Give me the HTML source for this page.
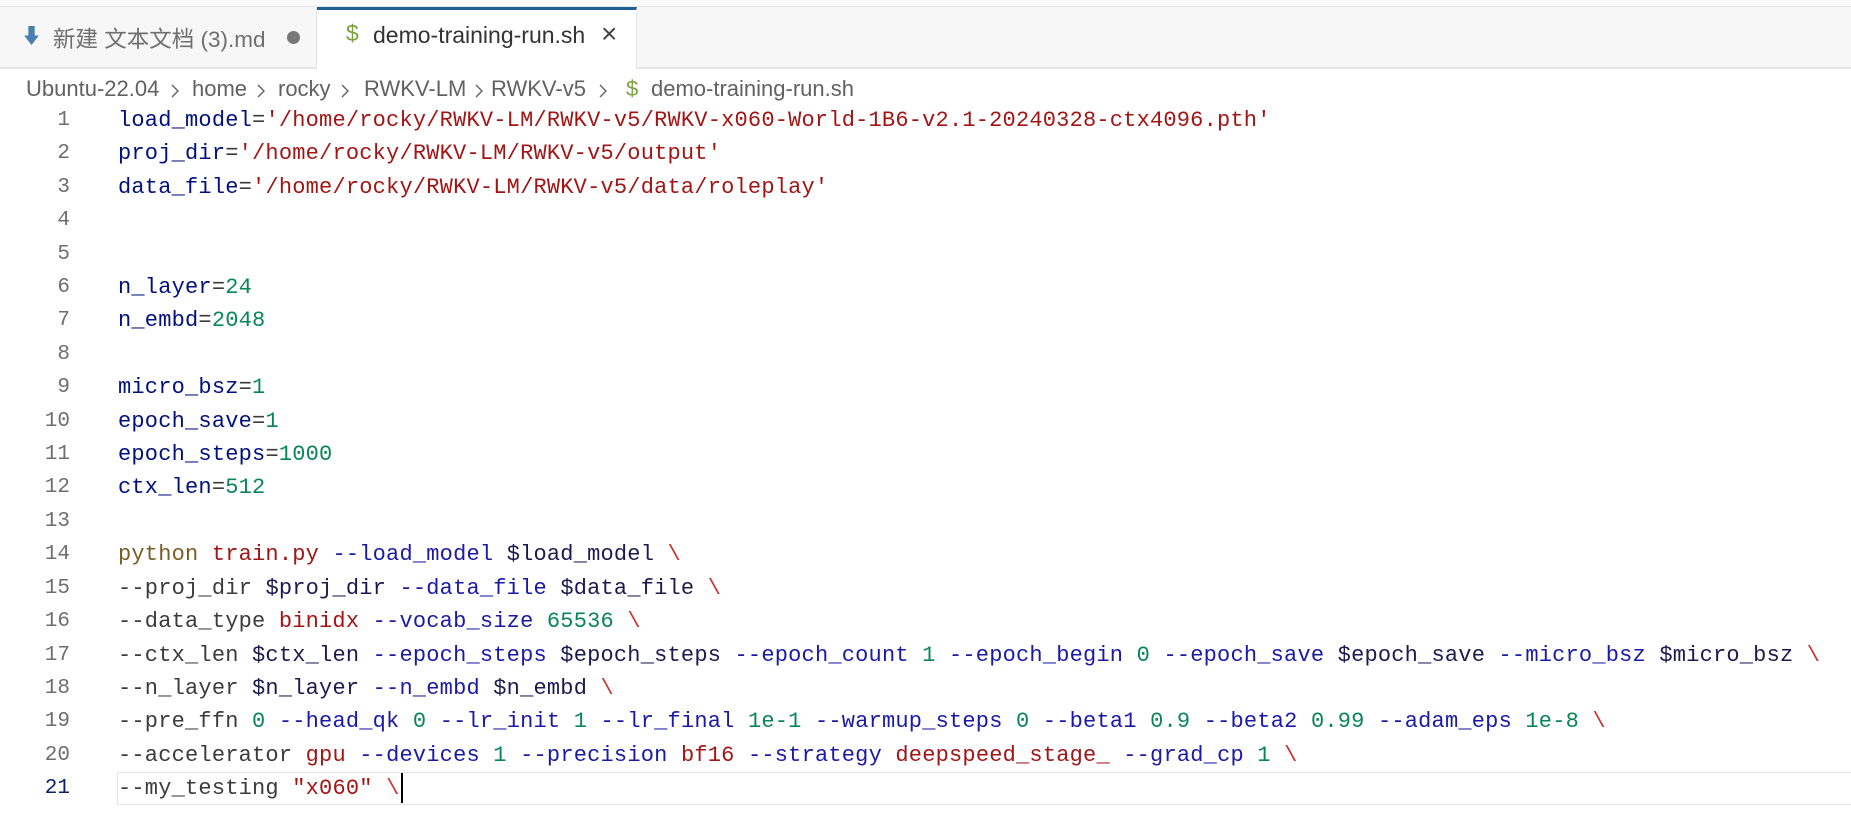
<!DOCTYPE html>
<html><head><meta charset="utf-8"><style>
body{margin:0;width:1851px;height:818px;background:#fff;overflow:hidden;position:relative;font-family:"Liberation Sans","Noto Sans CJK SC",sans-serif}
.top{position:absolute;left:0;top:0;width:1851px;height:6px;background:#fbfbfb;border-bottom:1px solid #e8e8e8}
.bar{position:absolute;left:0;top:7px;width:1851px;height:60px;background:#f7f7f7;border-bottom:2px solid #e5e5e5}
.tab1{position:absolute;left:0;top:7px;width:316px;height:60px;border-right:1px solid #e5e5e5;color:#6f6f6f;font-size:22.5px}
.tab2{position:absolute;left:317px;top:7px;width:320px;height:62px;background:#fff;border-top:3px solid #1f5f94;box-sizing:border-box;border-right:1px solid #e5e5e5;color:#333;font-size:23px}
.cb{position:absolute;top:76px;font-size:22px;color:#616161;white-space:pre}
.ch{position:absolute;top:83px}
.ln{position:absolute;left:0;width:70px;text-align:right;font-family:"Liberation Mono",monospace;font-size:21px;color:#6e6e6e;line-height:33.4px}
.code{position:absolute;left:118px;font-family:"Liberation Mono",monospace;font-size:22px;letter-spacing:0.2px;color:#3b3b3b;line-height:33.4px;white-space:pre}
.s{color:#a31515}.n{color:#098658}.v{color:#001080}.o{color:#1a1aa6}.d{color:#1b1b50}.f{color:#795e26}.b{color:#cd3131}
</style></head><body>
<div class="top"></div><div class="bar"></div>
<div class="tab1"><svg style="position:absolute;left:24px;top:19px" width="15" height="19" viewBox="0 0 14 18"><path d="M4 0h6v9h4l-7 9-7-9h4z" fill="#4a7fb0"/></svg><span style="position:absolute;left:53px;top:15px">新建 文本文档 (3).md</span><span style="position:absolute;left:287px;top:24px;width:13px;height:13px;border-radius:50%;background:#777"></span></div>
<div class="tab2"><span style="position:absolute;left:29px;top:10px;color:#7ba23f;font-size:23px">$</span><span style="position:absolute;left:56px;top:12px">demo-training-run.sh</span><span style="position:absolute;left:284px;top:8px;font-size:28px;color:#444">×</span></div>
<span class="cb" style="left:26px">Ubuntu-22.04</span>
<svg class="ch" style="left:170px" width="10" height="16" viewBox="0 0 10 16"><path d="M2 2l6 6-6 6" stroke="#616161" stroke-width="1.4" fill="none"/></svg>
<span class="cb" style="left:192px">home</span>
<svg class="ch" style="left:256px" width="10" height="16" viewBox="0 0 10 16"><path d="M2 2l6 6-6 6" stroke="#616161" stroke-width="1.4" fill="none"/></svg>
<span class="cb" style="left:278px">rocky</span>
<svg class="ch" style="left:340px" width="10" height="16" viewBox="0 0 10 16"><path d="M2 2l6 6-6 6" stroke="#616161" stroke-width="1.4" fill="none"/></svg>
<span class="cb" style="left:364px">RWKV-LM</span>
<svg class="ch" style="left:474px" width="10" height="16" viewBox="0 0 10 16"><path d="M2 2l6 6-6 6" stroke="#616161" stroke-width="1.4" fill="none"/></svg>
<span class="cb" style="left:491px">RWKV-v5</span>
<svg class="ch" style="left:598px" width="10" height="16" viewBox="0 0 10 16"><path d="M2 2l6 6-6 6" stroke="#616161" stroke-width="1.4" fill="none"/></svg>
<span class="cb" style="left:626px;color:#7ba23f">$</span>
<span class="cb" style="left:651px">demo-training-run.sh</span>
<div style="position:absolute;left:117px;top:772px;width:1740px;height:31px;border:1px solid #e6e6e6"></div>
<div style="position:absolute;left:401px;top:773px;width:2px;height:30px;background:#000"></div>
<div class="ln" style="top:104px">1<br>2<br>3<br>4<br>5<br>6<br>7<br>8<br>9<br>10<br>11<br>12<br>13<br>14<br>15<br>16<br>17<br>18<br>19<br>20<br><span style="color:#0b216f">21</span></div>
<div class="code" style="top:104px"><span class="v">load_model</span>=<span class="s">'/home/rocky/RWKV-LM/RWKV-v5/RWKV-x060-World-1B6-v2.1-20240328-ctx4096.pth'</span>
<span class="v">proj_dir</span>=<span class="s">'/home/rocky/RWKV-LM/RWKV-v5/output'</span>
<span class="v">data_file</span>=<span class="s">'/home/rocky/RWKV-LM/RWKV-v5/data/roleplay'</span>


<span class="v">n_layer</span>=<span class="n">24</span>
<span class="v">n_embd</span>=<span class="n">2048</span>

<span class="v">micro_bsz</span>=<span class="n">1</span>
<span class="v">epoch_save</span>=<span class="n">1</span>
<span class="v">epoch_steps</span>=<span class="n">1000</span>
<span class="v">ctx_len</span>=<span class="n">512</span>

<span class="f">python</span> <span class="s">train.py</span> <span class="o">--load_model</span> <span class="d">$load_model</span> <span class="b">\</span>
--proj_dir <span class="d">$proj_dir</span> <span class="o">--data_file</span> <span class="d">$data_file</span> <span class="b">\</span>
--data_type <span class="s">binidx</span> <span class="o">--vocab_size</span> <span class="n">65536</span> <span class="b">\</span>
--ctx_len <span class="d">$ctx_len</span> <span class="o">--epoch_steps</span> <span class="d">$epoch_steps</span> <span class="o">--epoch_count</span> <span class="n">1</span> <span class="o">--epoch_begin</span> <span class="n">0</span> <span class="o">--epoch_save</span> <span class="d">$epoch_save</span> <span class="o">--micro_bsz</span> <span class="d">$micro_bsz</span> <span class="b">\</span>
--n_layer <span class="d">$n_layer</span> <span class="o">--n_embd</span> <span class="d">$n_embd</span> <span class="b">\</span>
--pre_ffn <span class="n">0</span> <span class="o">--head_qk</span> <span class="n">0</span> <span class="o">--lr_init</span> <span class="n">1</span> <span class="o">--lr_final</span> <span class="n">1e-1</span> <span class="o">--warmup_steps</span> <span class="n">0</span> <span class="o">--beta1</span> <span class="n">0.9</span> <span class="o">--beta2</span> <span class="n">0.99</span> <span class="o">--adam_eps</span> <span class="n">1e-8</span> <span class="b">\</span>
--accelerator <span class="s">gpu</span> <span class="o">--devices</span> <span class="n">1</span> <span class="o">--precision</span> <span class="s">bf16</span> <span class="o">--strategy</span> <span class="s">deepspeed_stage_</span> <span class="o">--grad_cp</span> <span class="n">1</span> <span class="b">\</span>
--my_testing <span class="s">"x060"</span> <span class="b">\</span></div>
</body></html>
